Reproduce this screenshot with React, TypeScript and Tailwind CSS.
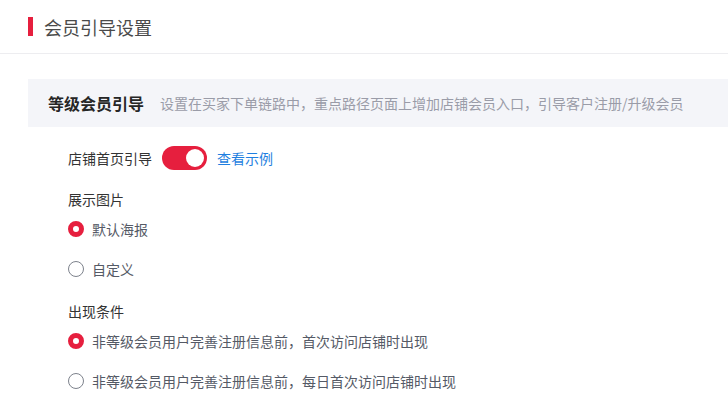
import React, { useState } from 'react'

const font = { fontFamily: '"Noto Sans CJK SC", "Noto Sans", sans-serif' }

function Radio({ checked, label, onClick }: { checked: boolean; label: string; onClick: () => void }) {
  return (
    <label className="flex h-5 cursor-pointer items-center" onClick={onClick}>
      {checked ? (
        <span className="box-border h-[16px] w-[16px] rounded-full border-[5px] border-[#e61f3e] bg-white" />
      ) : (
        <span className="box-border h-[16px] w-[16px] rounded-full border border-[#7d828c] bg-white" />
      )}
      <span className="ml-[8px] text-[14px] leading-5 text-[#555a66]">{label}</span>
    </label>
  )
}

export default function App() {
  const [enabled, setEnabled] = useState(true)
  const [poster, setPoster] = useState(0)
  const [cond, setCond] = useState(0)

  return (
    <div className="h-[409px] w-[728px] overflow-hidden bg-white" style={font}>
      {/* header */}
      <div className="flex h-[54px] items-center border-b border-[#ededf0] pl-[28px]">
        <span className="h-[19px] w-[5px] bg-[#e61f3e]" />
        <span className="ml-[11px] text-[18px] leading-6 text-[#4a4a4a]">会员引导设置</span>
      </div>

      <div className="ml-[28px] mt-[25px] flex h-[48px] items-center bg-[#f4f5f9] pl-[20px]">
        <span className="text-[16px] font-bold leading-6 text-[#262626]">等级会员引导</span>
        <span className="ml-[16px] whitespace-nowrap text-[14px] leading-5 text-[#9a9ca8]">
          设置在买家下单链路中，重点路径页面上增加店铺会员入口，引导客户注册/升级会员
        </span>
      </div>

      <div className="pl-[68px]">
        <div className="mt-[19px] flex h-6 items-center">
          <span className="text-[14px] leading-5 text-[#333]">店铺首页引导</span>
          <button
            onClick={() => setEnabled(!enabled)}
            className={`ml-[10px] flex h-[24px] w-[45px] items-center rounded-full p-[3px] ${
              enabled ? 'justify-end bg-[#e61f3e]' : 'justify-start bg-[#cfd2d9]'
            }`}
          >
            <span className="h-[18px] w-[18px] rounded-full bg-white" />
          </button>
          <span className="ml-[10px] text-[14px] leading-5 text-[#1f7fe0]">查看示例</span>
        </div>

        <div className="mt-[19px] text-[14px] leading-5 text-[#333]">展示图片</div>
        <div className="mt-[10px] flex flex-col gap-[20px]">
          <Radio checked={poster === 0} label="默认海报" onClick={() => setPoster(0)} />
          <Radio checked={poster === 1} label="自定义" onClick={() => setPoster(1)} />
        </div>

        <div className="mt-[22px] text-[14px] leading-5 text-[#333]">出现条件</div>
        <div className="mt-[10px] flex flex-col gap-[20px]">
          <Radio
            checked={cond === 0}
            label="非等级会员用户完善注册信息前，首次访问店铺时出现"
            onClick={() => setCond(0)}
          />
          <Radio
            checked={cond === 1}
            label="非等级会员用户完善注册信息前，每日首次访问店铺时出现"
            onClick={() => setCond(1)}
          />
        </div>
      </div>
    </div>
  )
}
